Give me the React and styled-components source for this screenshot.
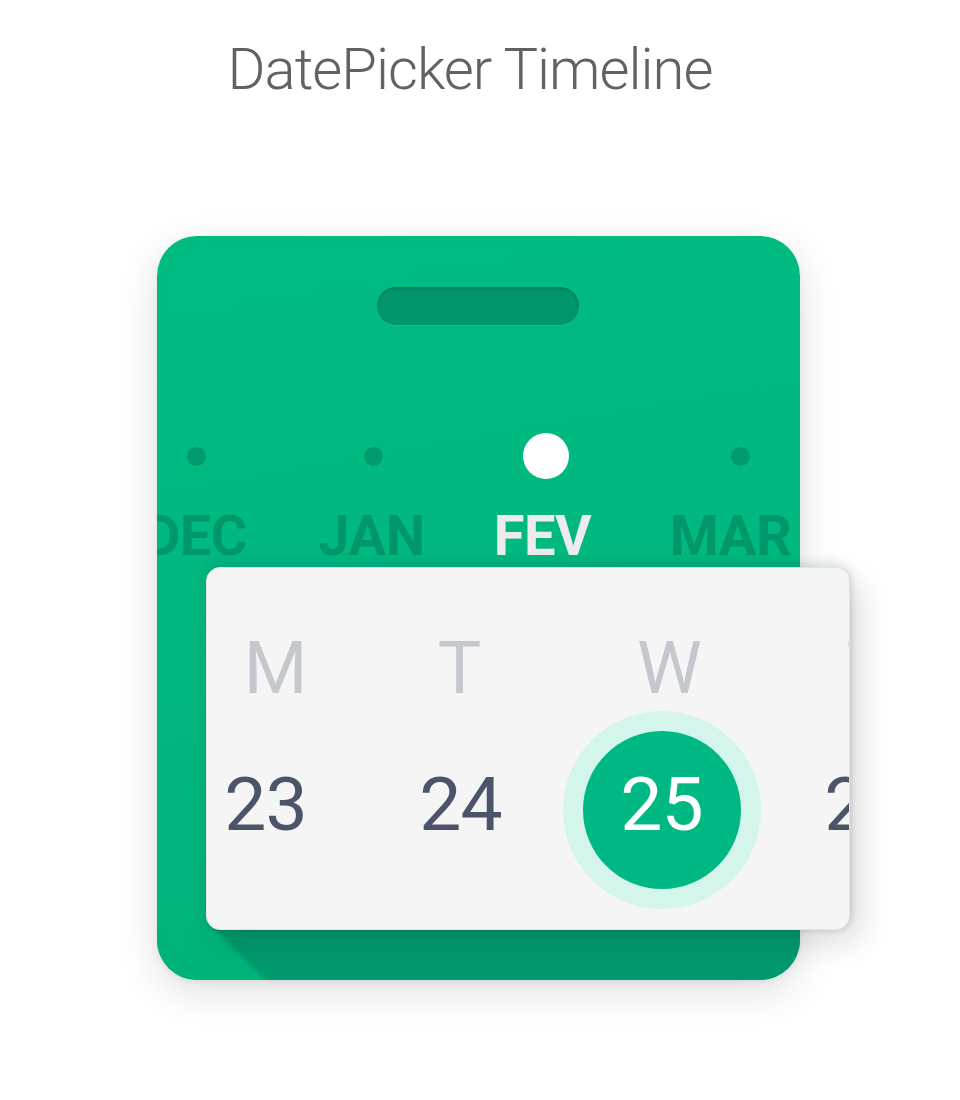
import React from "react";
import styled, { createGlobalStyle } from "styled-components";

const Global = createGlobalStyle`
  html, body { margin: 0; padding: 0; background: #ffffff; }
  body { font-family: Roboto, "Noto Sans", sans-serif; }
`;

const Page = styled.div`
  width: 960px;
  height: 1100px;
  display: flex;
  flex-direction: column;
  align-items: center;
  overflow: hidden;
`;

const Title = styled.h1`
  margin: 40px 0 0 -20px;
  font-family: Roboto, sans-serif;
  font-weight: 300;
  font-size: 58px;
  line-height: 1;
  color: #5f6463;
  letter-spacing: -1px;
`;

const Card = styled.div`
  margin-top: 138px;
  margin-left: -4px;
  width: 643px;
  height: 744px;
  border-radius: 40px;
  background: linear-gradient(170deg, #00bc82 0%, #00b880 45%, #00b27b 100%);
  box-shadow: 0 12px 40px rgba(0, 0, 0, 0.13), 0 2px 6px rgba(0, 0, 0, 0.06);
  display: flex;
  flex-direction: column;
`;

const Slot = styled.div`
  align-self: center;
  margin-top: 51px;
  width: 202px;
  height: 38px;
  border-radius: 19px;
  background: #00956a;
  box-shadow: inset 0 2px 3px rgba(0, 0, 0, 0.14), 0 1px 1px rgba(255, 255, 255, 0.08);
`;

const Timeline = styled.div`
  margin-top: 108px;
  height: 137px;
  overflow-x: clip;
  overflow-y: visible;
`;

const Row = styled.div`
  display: flex;
  margin-left: -48px;
`;

const DotRow = styled(Row)`
  height: 46px;
  align-items: center;
`;

const LabelRow = styled(Row)`
  margin-top: 24px;
`;

const Col = styled.div`
  flex: 0 0 auto;
  width: ${(p) => p.$w}px;
  display: flex;
  justify-content: center;
  align-items: center;
`;

const Dot = styled.span`
  display: block;
  width: ${(p) => (p.$active ? 46 : 19)}px;
  height: ${(p) => (p.$active ? 46 : 19)}px;
  border-radius: 50%;
  background: ${(p) => (p.$active ? "#ffffff" : "#009a6c")};
`;

const MonthLabel = styled.span`
  font-family: Roboto, sans-serif;
  font-weight: 700;
  font-size: 56px;
  line-height: 1.2;
  letter-spacing: -0.5px;
  white-space: nowrap;
  color: ${(p) => (p.$active ? "#ececec" : "#00976a")};
`;

const Panel = styled.div`
  position: relative;
  margin-top: -3px;
  margin-left: 49px;
  margin-right: -50px;
  height: 363px;
  box-sizing: border-box;
  padding-top: 64px;
  border-radius: 14px;
  background: #f5f5f6;
  border: 1px solid #e4e4e6;
  box-shadow: 12px 14px 30px rgba(0, 0, 0, 0.12), 0 -4px 12px rgba(0, 70, 50, 0.14),
    2px 2px 4px rgba(0, 0, 0, 0.06);
  overflow: hidden;
`;

const DayRow = styled.div`
  display: flex;
  margin-left: ${(p) => p.$offset}px;
`;

const WeekdayRow = styled(DayRow)``;

const NumberRow = styled(DayRow)`
  margin-top: 6px;
  height: 198px;
  align-items: center;
`;

const Cell = styled.div`
  flex: 0 0 auto;
  width: ${(p) => p.$w}px;
  display: flex;
  justify-content: center;
  align-items: center;
`;

const Weekday = styled.span`
  font-family: Roboto, sans-serif;
  font-weight: 400;
  font-size: 73px;
  line-height: 1;
  color: #c4c7cc;
`;

const Ring = styled.div`
  width: 198px;
  height: 198px;
  border-radius: 50%;
  background: #d3f5eb;
  display: flex;
  align-items: center;
  justify-content: center;
`;

const Bubble = styled.div`
  width: 158px;
  height: 158px;
  border-radius: 50%;
  background: #00b884;
  display: flex;
  align-items: center;
  justify-content: center;
`;

const DayNumber = styled.span`
  font-family: Roboto, sans-serif;
  font-weight: 400;
  font-size: 75px;
  line-height: 1;
  padding-bottom: 12px;
  letter-spacing: -1px;
  color: ${(p) => (p.$selected ? "#ffffff" : "#4b5468")};
`;

const Band = styled.div`
  flex: 1;
  border-radius: 0 0 40px 40px;
  background: linear-gradient(45deg, #00b37b 0, #00b37b 74px, #009a6e 79px, #009a6e 100%);
`;

const months = [
  { label: "DEC", dotW: 176, labelW: 174 },
  { label: "JAN", dotW: 178, labelW: 178 },
  { label: "FEV", dotW: 166, labelW: 164, active: true },
  { label: "MAR", dotW: 224, labelW: 212 },
];

const weekdays = [
  { label: "M", w: 200 },
  { label: "T", w: 168 },
  { label: "W", w: 252 },
  { label: "T", w: 146 },
];

const days = [
  { n: 23, w: 200 },
  { n: 24, w: 190 },
  { n: 25, w: 212, selected: true },
  { n: 26, w: 196 },
];

export default function App() {
  return (
    <>
      <Global />
      <Page>
        <Title>DatePicker Timeline</Title>
        <Card>
          <Slot />
          <Timeline>
            <DotRow>
              {months.map((m) => (
                <Col key={m.label} $w={m.dotW}>
                  <Dot $active={m.active} />
                </Col>
              ))}
            </DotRow>
            <LabelRow>
              {months.map((m) => (
                <Col key={m.label} $w={m.labelW}>
                  <MonthLabel $active={m.active}>{m.label}</MonthLabel>
                </Col>
              ))}
            </LabelRow>
          </Timeline>
          <Panel>
            <WeekdayRow $offset={-31}>
              {weekdays.map((d, i) => (
                <Cell key={i} $w={d.w}>
                  <Weekday>{d.label}</Weekday>
                </Cell>
              ))}
            </WeekdayRow>
            <NumberRow $offset={-41}>
              {days.map((d) => (
                <Cell key={d.n} $w={d.w}>
                  {d.selected ? (
                    <Ring>
                      <Bubble>
                        <DayNumber $selected>{d.n}</DayNumber>
                      </Bubble>
                    </Ring>
                  ) : (
                    <DayNumber>{d.n}</DayNumber>
                  )}
                </Cell>
              ))}
            </NumberRow>
          </Panel>
          <Band />
        </Card>
      </Page>
    </>
  );
}
